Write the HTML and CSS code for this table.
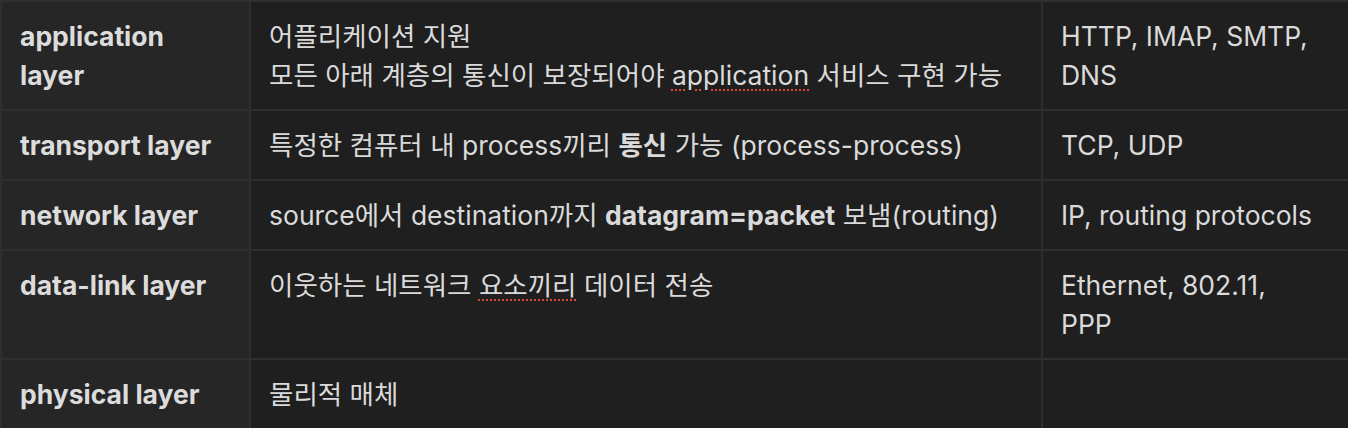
FILE: index.html
```html
<!DOCTYPE html>
<html lang="ko">
<head>
<meta charset="utf-8">
<title>Network layers</title>
<link rel="stylesheet" href="styles.css">
</head>
<body>
<table class="layers">
  <colgroup>
    <col class="c-name">
    <col class="c-desc">
    <col class="c-proto">
  </colgroup>
  <tbody>
    <tr>
      <th>application<br>layer</th>
      <td>어플리케이션 지원<br>모든 아래 계층의 통신이 보장되어야 <span class="misspelled">application</span> 서비스 구현 가능</td>
      <td>HTTP, IMAP, SMTP,<br>DNS</td>
    </tr>
    <tr>
      <th>transport layer</th>
      <td>특정한 컴퓨터 내 process끼리 <strong>통신</strong> 가능 (process-process)</td>
      <td>TCP, UDP</td>
    </tr>
    <tr>
      <th>network layer</th>
      <td>source에서 destination까지 <strong>datagram=packet</strong> 보냄(routing)</td>
      <td>IP, routing protocols</td>
    </tr>
    <tr>
      <th>data-link layer</th>
      <td>이웃하는 네트워크 <span class="misspelled">요소끼리</span> 데이터 전송</td>
      <td>Ethernet, 802.11,<br>PPP</td>
    </tr>
    <tr>
      <th>physical layer</th>
      <td>물리적 매체</td>
      <td></td>
    </tr>
  </tbody>
</table>
</body>
</html>
```
FILE: styles.css
```css
html, body {
  margin: 0;
  padding: 0;
  background: #1f1f1f;
}

body {
  font-family: Inter, "Noto Sans CJK KR", sans-serif;
  font-size: 26.5px;
  line-height: 39px;
  color: #dadada;
}

.layers {
  border-collapse: collapse;
  table-layout: fixed;
  width: 1348px;
}

.c-name { width: 249px; }
.c-desc { width: 792px; }
.c-proto { width: 307px; }

.layers th,
.layers td {
  border: 2px solid #2f2f2f;
  padding: 14.5px 18px;
  text-align: left;
  vertical-align: top;
  white-space: nowrap;
}

.layers th {
  background: #262626;
  font-weight: 700;
  color: #dcdcdc;
}

.layers td {
  background: #1f1f1f;
  font-weight: 400;
}

.layers strong {
  font-weight: 700;
}

.misspelled {
  text-decoration-line: underline;
  text-decoration-style: dotted;
  text-decoration-color: #d9493a;
  text-decoration-thickness: 2px;
  text-underline-offset: 5px;
}
```
